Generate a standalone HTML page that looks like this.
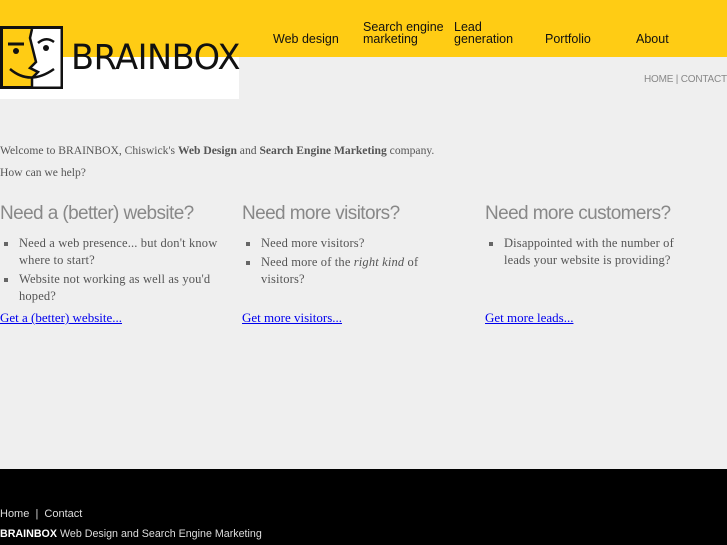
<!DOCTYPE html>
<html><head><style>
body{margin:0;width:727px;height:545px;background:#efefef;position:relative;overflow:hidden;font-family:"Liberation Serif",serif;}
.a{position:absolute;}
.nav{font-family:"Liberation Sans",sans-serif;font-size:12.5px;line-height:12px;color:#111;}
.s{font-family:"Liberation Serif",serif;color:#555;font-size:11.6px;}
h2{margin:0;font-family:"Liberation Sans",sans-serif;font-weight:normal;font-size:19px;color:#888;letter-spacing:-0.6px;}
ul{margin:0;padding:0;list-style:none;}
li{position:relative;padding-left:19px;line-height:17px;margin-bottom:1.5px;font-size:12.5px;color:#555;letter-spacing:0.15px}
li:before{content:"";position:absolute;left:4px;top:7px;width:4px;height:4px;background:#666;}
a.l{font-size:13px;color:#00e;text-decoration:underline;}
</style></head><body>
<div class="a" style="left:0;top:0;width:727px;height:57px;background:#ffcc14"></div>
<div class="a" style="left:0;top:57px;width:239px;height:42px;background:#fff"></div>
<svg class="a" style="left:0;top:26px" width="64" height="64" viewBox="0 0 64 64">
<rect x="1.5" y="1.5" width="60" height="60" fill="#ffcc14" stroke="#111" stroke-width="3"/>
<path d="M32 3 H60.5 V60.5 H32 V52 L38 46 L30 42 L36 36 L30 12 Z" fill="#fff"/>
<path d="M32 3 L30 12 L36 36 L30 42 L38 46 L32 52 V61" fill="none" stroke="#111" stroke-width="2.5"/>
<path d="M8 18 H24" stroke="#111" stroke-width="3"/>
<circle cx="16" cy="25" r="3" fill="#111"/><circle cx="46" cy="22" r="3" fill="#111"/>
<path d="M38 17 Q46 10 54 16" fill="none" stroke="#111" stroke-width="2.5"/>
<path d="M10 43 Q30 60 54 43" fill="none" stroke="#111" stroke-width="2.5"/>
</svg>
<div class="a" style="left:71px;top:38px;font-family:'DejaVu Sans','Liberation Sans',sans-serif;font-size:35px;line-height:40px;color:#111;letter-spacing:-0.5px;transform:scaleX(0.96);transform-origin:left">BRAINBOX</div>
<div class="a nav" style="left:273px;top:33px">Web design</div>
<div class="a nav" style="left:363px;top:21px">Search engine<br>marketing</div>
<div class="a nav" style="left:454px;top:21px">Lead<br>generation</div>
<div class="a nav" style="left:545px;top:33px">Portfolio</div>
<div class="a nav" style="left:636px;top:33px">About</div>
<div class="a" style="left:644px;top:74px;font-family:'Liberation Sans',sans-serif;font-size:10px;color:#888;white-space:nowrap;letter-spacing:-0.2px">HOME | CONTACT</div>
<div class="a s" style="left:0;top:144px;white-space:nowrap">Welcome to BRAINBOX, Chiswick's <b>Web Design</b> and <b>Search Engine Marketing</b> company.</div>
<div class="a s" style="left:0;top:166px">How can we help?</div>
<div class="a" style="left:0;top:203px;width:218px"><h2>Need a (better) website?</h2>
<ul style="margin-top:10px"><li>Need a web presence... but don't know where to start?</li><li>Website not working as well as you'd hoped?</li></ul></div>
<div class="a" style="left:242px;top:203px;width:200px"><h2>Need more visitors?</h2>
<ul style="margin-top:10px"><li>Need more visitors?</li><li>Need more of the <i>right kind</i> of visitors?</li></ul></div>
<div class="a" style="left:485px;top:203px;width:205px"><h2>Need more customers?</h2>
<ul style="margin-top:10px"><li>Disappointed with the number of leads your website is providing?</li></ul></div>
<a class="a l" style="left:0;top:310px">Get a (better) website...</a>
<a class="a l" style="left:242px;top:310px">Get more visitors...</a>
<a class="a l" style="left:485px;top:310px">Get more leads...</a>
<div class="a" style="left:0;top:469px;width:727px;height:76px;background:#000"></div>
<div class="a" style="left:0;top:508px;font-family:'Liberation Sans',sans-serif;font-size:11px;color:#ddd">Home &nbsp;|&nbsp; Contact</div>
<div class="a" style="left:0;top:528px;font-family:'Liberation Sans',sans-serif;font-size:10.7px;color:#ddd;white-space:nowrap"><b style="color:#fff">BRAINBOX</b> Web Design and Search Engine Marketing</div>
</body></html>
